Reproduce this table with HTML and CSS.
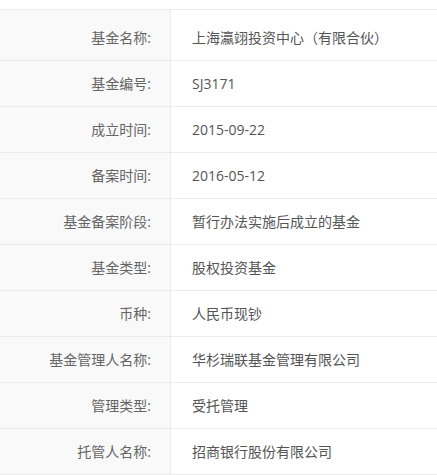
FILE: index.html
```html
<!DOCTYPE html>
<html lang="zh-CN">
<head>
  <meta charset="UTF-8">
  <title>基金基本信息</title>
  <link rel="stylesheet" href="styles.css">
</head>
<body>
  <div class="info-table">
    <div class="row first">
      <div class="label">基金名称:</div>
      <div class="value">上海瀛翊投资中心（有限合伙）</div>
    </div>
    <div class="row">
      <div class="label">基金编号:</div>
      <div class="value">SJ3171</div>
    </div>
    <div class="row">
      <div class="label">成立时间:</div>
      <div class="value">2015-09-22</div>
    </div>
    <div class="row">
      <div class="label">备案时间:</div>
      <div class="value">2016-05-12</div>
    </div>
    <div class="row">
      <div class="label">基金备案阶段:</div>
      <div class="value">暂行办法实施后成立的基金</div>
    </div>
    <div class="row">
      <div class="label">基金类型:</div>
      <div class="value">股权投资基金</div>
    </div>
    <div class="row">
      <div class="label">币种:</div>
      <div class="value">人民币现钞</div>
    </div>
    <div class="row">
      <div class="label">基金管理人名称:</div>
      <div class="value">华杉瑞联基金管理有限公司</div>
    </div>
    <div class="row">
      <div class="label">管理类型:</div>
      <div class="value">受托管理</div>
    </div>
    <div class="row">
      <div class="label">托管人名称:</div>
      <div class="value">招商银行股份有限公司</div>
    </div>
  </div>
</body>
</html>
```

FILE: styles.css
```css
* { box-sizing: border-box; }
body {
  margin: 0;
  background: #fff;
  font-family: "Open Sans", "Noto Sans CJK SC", sans-serif;
  font-size: 14px;
}
.info-table {
  margin-top: 9px;
  border-top: 1px solid #ebebeb;
}
.row {
  display: grid;
  grid-template-columns: 171px 1fr;
  height: 46px;
  border-bottom: 1px solid #ebebeb;
}
.row.first {
  height: 51px;
}
.label,
.value {
  display: flex;
  align-items: center;
  line-height: 20px;
}
.label {
  justify-content: flex-end;
  padding-right: 19px;
  background: #f9f9f9;
  border-right: 1px solid #ebebeb;
  color: #666;
}
.value {
  padding-left: 21px;
  color: #555;
}
.row.first .label,
.row.first .value {
  padding-top: 5px;
}
```
